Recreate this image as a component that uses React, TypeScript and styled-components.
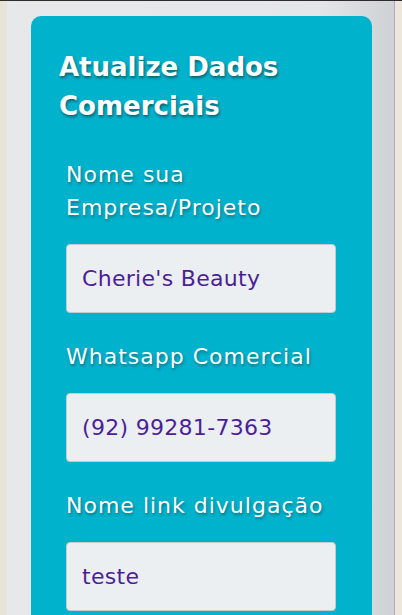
import React from "react";
import styled, { createGlobalStyle } from "styled-components";

const Global = createGlobalStyle`
  html, body { margin: 0; padding: 0; }
  body {
    background: #ebe4d8;
    font-family: "DejaVu Sans", "Open Sans", sans-serif;
    overflow: hidden;
  }
`;

const Page = styled.div`
  height: 615px;
  border-top: 1px solid #2d2d2d;
  box-sizing: border-box;
  display: flex;
  padding: 0 7px;
  background: linear-gradient(90deg, #e9e2d6 0%, #ece6db 100%);
  overflow: hidden;
`;

const Frame = styled.div`
  flex: 1;
  border-right: 1px solid #b7a6c8;
  background: linear-gradient(90deg, #e6e8ea 0%, #e4e7e9 80%, #cfd2d4 100%);
  padding: 15px 0 0 24px;
  box-sizing: border-box;
`;

const Card = styled.section`
  width: 341px;
  height: 640px;
  background: #00b2cc;
  border-radius: 10px;
  box-sizing: border-box;
  padding: 32px 0 0 28px;
`;

const Title = styled.h1`
  margin: 0 0 32px 0;
  color: #ffffff;
  font-size: 26px;
  font-weight: 700;
  line-height: 39px;
  text-shadow: 1px 2px 3px rgba(0, 0, 0, 0.45);
`;

const Form = styled.form`
  display: flex;
  flex-direction: column;
  padding-left: 7px;
`;

const Field = styled.div`
  display: flex;
  flex-direction: column;
  gap: 20px;
  margin-bottom: 27px;
`;

const Label = styled.label`
  color: #ffffff;
  font-size: 22px;
  font-weight: 400;
  letter-spacing: 1px;
  line-height: 33px;
  width: 262px;
  text-shadow: 1px 2px 3px rgba(0, 0, 0, 0.35);
`;

const Input = styled.input`
  width: 270px;
  height: 69px;
  box-sizing: border-box;
  background: #eceff1;
  border: 1px solid #c5cacd;
  border-radius: 4px;
  padding: 0 15px;
  font-family: inherit;
  font-size: 22px;
  letter-spacing: 0.3px;
  color: #4b1f98;
  outline: none;
`;

const fields = [
  { id: "empresa", label: "Nome sua Empresa/Projeto", value: "Cherie's Beauty" },
  { id: "whats", label: "Whatsapp Comercial", value: "(92) 99281-7363" },
  { id: "link", label: "Nome link divulgação", value: "teste" },
];

export default function App() {
  return (
    <>
      <Global />
      <Page>
        <Frame>
          <Card>
            <Title>Atualize Dados Comerciais</Title>
            <Form>
              {fields.map((f) => (
                <Field key={f.id}>
                  <Label htmlFor={f.id}>{f.label}</Label>
                  <Input id={f.id} defaultValue={f.value} />
                </Field>
              ))}
            </Form>
          </Card>
        </Frame>
      </Page>
    </>
  );
}
